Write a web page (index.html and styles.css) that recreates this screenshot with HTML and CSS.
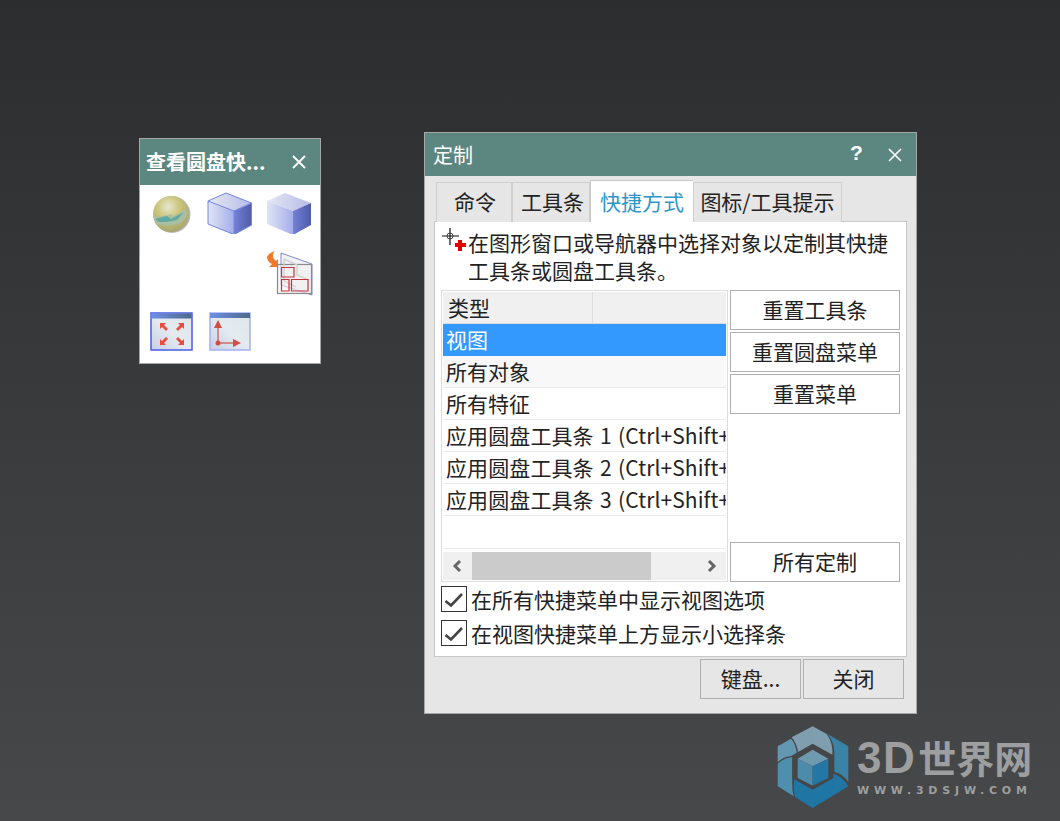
FILE: index.html
```html
<!DOCTYPE html>
<html lang="zh-CN">

<head>
  <meta charset="UTF-8">
  <title>定制</title>
  <link rel="stylesheet" href="styles.css">
</head>

<body>
  <!-- small radial toolbar window -->
  <div class="window pie-window">
    <div class="titlebar pie-title">
      <span class="pie-name">查看圆盘快...</span>
      <svg class="close" width="14" height="14" viewBox="0 0 14 14"><path d="M1 1 13 13M13 1 1 13" stroke="#fff" stroke-width="1.8" fill="none"/></svg>
    </div>
    <div class="pie-grid">
      <svg class="ball-icon" width="40" height="40" viewBox="0 0 40 40">
        <defs>
          <radialGradient id="ball" cx="0.42" cy="0.3" r="0.7"><stop offset="0" stop-color="#e8e6d0"/><stop offset="0.45" stop-color="#cbc67c"/><stop offset="1" stop-color="#a8a66e"/></radialGradient>
        </defs>
        <circle cx="20" cy="19.500" r="18.500" fill="#b8b8b8"/>
        <circle cx="19" cy="19" r="18" fill="url(#ball)"/>
        <path d="M1.500 22C8 20 14 22 18 19L22 21 33 15 36 17C35 23 31 27 26 29L14 31 5 29Z" fill="#a9bf9f"/>
        <path d="M3 24 15 21 19 24 32 17 25 25 15 27 7 27Z" fill="#5fa9a3"/>
      </svg>
      <svg width="46" height="44" viewBox="0 0 46 44">
        <defs>
          <linearGradient id="faceA" x1="0" x2="1" y1="0" y2="0"><stop offset="0" stop-color="#dfe5f5"/><stop offset="1" stop-color="#a4aeea"/></linearGradient>
          <linearGradient id="faceB" x1="0" x2="1" y1="0" y2="0"><stop offset="0" stop-color="#7481d6"/><stop offset="1" stop-color="#4e5ba8"/></linearGradient>
          <linearGradient id="faceT" x1="0" x2="1" y1="0" y2="0"><stop offset="0" stop-color="#e6e8f2"/><stop offset="1" stop-color="#b4bbe8"/></linearGradient>
        </defs>
        <path d="M2 11 20 3 46 13 28 21Z" fill="url(#faceT)"/>
        <path d="M2 11 28 21V45L2 34Z" fill="url(#faceA)"/>
        <path d="M28 21 46 13V35L28 45Z" fill="url(#faceB)"/>
        <path d="M2 11 20 3 45.500 13V35L28 44.500 2 34ZM2 11 28 21 45.500 13M28 21V44" fill="none" stroke="#7485de" stroke-width="1"/>
      </svg>
      <svg width="46" height="44" viewBox="0 0 46 44">
        <path d="M2 11 20 3 46 13 28 21Z" fill="url(#faceT)"/>
        <path d="M2 11 28 21V45L2 34Z" fill="url(#faceA)"/>
        <path d="M28 21 46 13V35L28 45Z" fill="url(#faceB)"/>
      </svg>
      <span></span>
      <span></span>
      <svg width="48" height="46" viewBox="0 0 48 46">
        <path d="M16 3 47 14V45L16 35Z" fill="#f2f2f6" stroke="#8088cc"/>
        <path d="M19 9 32 15V25L44 30M19 9V31L31 37" fill="none" stroke="#cfcfcf" stroke-width="1.500"/>
        <path d="M2 7C4 3 7 2 10 1 7 4 7 8 11 11L13 9V17H4L7 14C3 12 2 9 2 7Z" fill="#ee7a2e"/>
        <rect x="12.500" y="14.500" width="34" height="29" fill="#f0f0f0" fill-opacity="0.6" stroke="#8a8a8a" stroke-width="1.200"/>
        <path d="M19 9 32 15V25L44 30M19 14V31L31 37" fill="none" stroke="#d4d4d4" stroke-width="1.200"/>
        <path d="M16.500 17.500H29V27H16.500ZM16.500 29.500H24V41H16.500ZM26.500 29.500H43V41H26.500Z" fill="none" stroke="#c8323c" stroke-width="1.200"/>
      </svg>
      <svg width="44" height="40" viewBox="0 0 44 40">
        <defs>
          <linearGradient id="pane" x1="0" x2="1" y1="1" y2="0"><stop offset="0" stop-color="#c7cfe6"/><stop offset="0.5" stop-color="#e4ebf0"/><stop offset="1" stop-color="#dfe6ea"/></linearGradient>
          <linearGradient id="cap" x1="0" x2="1" y1="0" y2="0"><stop offset="0" stop-color="#6f8fe8"/><stop offset="1" stop-color="#4c6a88"/></linearGradient>
        </defs>
        <rect x="1" y="1" width="41" height="37" fill="url(#pane)" stroke="#4a5be8" stroke-width="1.500"/>
        <rect x="1.500" y="1.500" width="40" height="5" fill="url(#cap)"/>
        <path d="M10 11H16L14 13 18 17 16 19 12 15 10 17ZM34 11H28L30 13 26 17 28 19 32 15 34 17ZM10 33H16L14 31 18 27 16 25 12 29 10 27ZM34 33H28L30 31 26 27 28 25 32 29 34 27Z" fill="#ea4b3c"/>
      </svg>
      <svg class="axis-icon" width="42" height="40" viewBox="0 0 42 40">
        <rect x="1" y="1" width="40" height="37" fill="url(#pane)" stroke="#a4b0f0" stroke-width="1.500"/>
        <rect x="1" y="1" width="40" height="5" fill="url(#cap)"/>
        <path d="M9 31V15" stroke="#c8504a" stroke-width="1.200"/>
        <path d="M9 31H26" stroke="#c8504a" stroke-width="1.200"/>
        <path d="M9 8 13 16H5ZM32 31 24 27V35Z" fill="#cf4d42"/>
        <circle cx="9" cy="31" r="2.500" fill="#cf4d42"/>
      </svg>
    </div>
  </div>

  <!-- customize dialog -->
  <div class="window dialog">
    <div class="titlebar dlg-title">
      <span class="dlg-name">定制</span>
      <span class="help">?</span>
      <svg class="close" width="14" height="14" viewBox="0 0 14 14"><path d="M1 1 13 13M13 1 1 13" stroke="#fff" stroke-width="1.600" fill="none"/></svg>
    </div>
    <div class="dlg-body">
      <div class="tabs">
        <div class="tab tab-cmd">命令</div>
        <div class="tab tab-bar">工具条</div>
        <div class="tab active">快捷方式</div>
        <div class="tab tab-icon">图标/工具提示</div>
      </div>
      <div class="panel">
        <div class="hint">
          <svg class="pick" width="26" height="26" viewBox="0 0 26 26">
            <path d="M0 8H17M8 0V17" stroke="#111" stroke-width="1.200"/>
            <circle cx="8" cy="8" r="3" fill="none" stroke="#444"/>
            <path d="M16 12H20V15H24V19H20V23H16V19H13V15H16Z" fill="#e00000"/>
          </svg>
          <p>在图形窗口或导航器中选择对象以定制其快捷<br>工具条或圆盘工具条。</p>
        </div>
        <div class="middle">
          <div class="list">
            <div class="list-head"><span class="col-type">类型</span><span></span></div>
            <div class="row selected">视图</div>
            <div class="row alt">所有对象</div>
            <div class="row">所有特征</div>
            <div class="row row-key">应用圆盘工具条 1 (Ctrl+Shift+</div>
            <div class="row row-key">应用圆盘工具条 2 (Ctrl+Shift+</div>
            <div class="row row-key">应用圆盘工具条 3 (Ctrl+Shift+</div>
            <div class="list-empty"></div>
            <div class="scrollbar">
              <svg class="arrow" width="10" height="14" viewBox="0 0 10 14"><path d="M8 2 3 7 8 12" fill="none" stroke="#666" stroke-width="3"/></svg>
              <div class="track"><div class="thumb"></div></div>
              <svg class="arrow" width="10" height="14" viewBox="0 0 10 14"><path d="M2 2 7 7 2 12" fill="none" stroke="#666" stroke-width="3"/></svg>
            </div>
          </div>
          <div class="side">
            <button class="btn" type="button">重置工具条</button>
            <button class="btn" type="button">重置圆盘菜单</button>
            <button class="btn" type="button">重置菜单</button>
            <button class="btn btn-last" type="button">所有定制</button>
          </div>
        </div>
        <div class="check"><span class="box"><svg width="24" height="24" viewBox="0 0 24 24"><path d="M3.500 14 9 18.500 20 7" fill="none" stroke="#444" stroke-width="2.600"/></svg></span>在所有快捷菜单中显示视图选项</div>
        <div class="check"><span class="box"><svg width="24" height="24" viewBox="0 0 24 24"><path d="M3.500 14 9 18.500 20 7" fill="none" stroke="#444" stroke-width="2.600"/></svg></span>在视图快捷菜单上方显示小选择条</div>
      </div>
      <div class="footer">
        <button class="btn btn-foot" type="button">键盘...</button>
        <button class="btn btn-foot" type="button">关闭</button>
      </div>
    </div>
  </div>

  <!-- watermark -->
  <div class="mark">
    <svg width="76" height="88" viewBox="0 0 228 264">
      <path d="M50 43 113 10 155 33Q175 60 172 98L113 64 70 90Q65 60 50 43Z" fill="#7f9fb0"/>
      <path d="M158 33 220 70V178Q205 152 178 146V98Q180 60 158 33Z" fill="#3a82a6"/>
      <path d="M220 190 113 255 60 222Q54 190 58 167L113 198 175 152Q202 160 220 190Z" fill="#1f76a5"/>
      <path d="M8 122Q28 104 52 102V165Q50 195 56 220L8 190Z" fill="#4f8fae"/>
      <path d="M8 70 48 47Q62 62 66 92L52 98Q25 100 8 118Z" fill="#6498b2"/>
      <path d="M113 62 175 97V165L113 200 52 165V97Z" fill="#454648"/>
      <path d="M68 107 113 80 160 107 113 130Z" fill="#6f99ae"/>
      <path d="M68 107 113 130V188L68 165Z" fill="#4e8bab"/>
      <path d="M160 107V165L113 188V130Z" fill="#2477a5"/>
    </svg>
    <div class="mark-text">
      <div class="mark-name"><span class="mark-3d">3D</span>世界网</div>
      <div class="mark-url">WWW.3DSJW.COM</div>
    </div>
  </div>
</body>

</html>
```

FILE: styles.css
```css
*,
*:before,
*:after {
  box-sizing: border-box;
}

html,
body {
  height: 100%;
}

body {
  margin: 0;
  padding: 0;
  overflow: hidden;
  position: relative;
  background: linear-gradient(#2c2d2f, #47484a);
  font-family: "Noto Sans CJK SC", "Noto Sans", sans-serif;
  font-size: 21px;
  color: #222;
}

svg {
  display: block;
}

.window {
  position: absolute;
  border: 1px solid #a6a6a6;
}

.titlebar {
  display: flex;
  align-items: center;
  background: #5c8780;
  color: #fff;
}

/* pie window */
.pie-window {
  left: 139px;
  top: 138px;
  width: 182px;
  height: 226px;
  background: #fff;
}

.pie-title {
  height: 46px;
  padding: 0 14px 0 6px;
  justify-content: space-between;
}

.pie-name {
  font-size: 20px;
  font-weight: 700;
  position: relative;
  top: -1px;
}

.pie-grid {
  display: grid;
  grid-template-columns: 56px 59px 48px;
  grid-template-rows: 60px 62px 40px;
  justify-items: start;
  padding: 5px 0 0 10px;
}

.ball-icon {
  margin: 5px 0 0 2px;
}

.axis-icon {
  margin-left: 3px;
}

/* dialog */
.dialog {
  left: 424px;
  top: 132px;
  width: 493px;
  height: 582px;
  background: #e6e6e6;
}

.dlg-title {
  height: 43px;
  padding: 0 14px 0 8px;
}

.dlg-name {
  flex: 1;
  font-size: 20px;
}

.help {
  width: 38px;
  font-family: "Liberation Sans", sans-serif;
  font-weight: 700;
  font-size: 21px;
  margin-top: -3px;
}

.dlg-body {
  padding: 4px 9px 0 9px;
}

.tabs {
  display: flex;
  align-items: flex-end;
  height: 42px;
  padding-left: 2px;
  position: relative;
  z-index: 1;
  margin-bottom: -1px;
}

.tab {
  height: 40px;
  line-height: 36px;
  text-align: center;
  background: #e6e6e6;
  border: 1px solid #cfcfcf;
  border-bottom: none;
  white-space: nowrap;
}

.tab-cmd {
  width: 76px;
  padding-left: 2px;
}

.tab-bar {
  width: 78px;
  padding-left: 3px;
}

.tab-icon {
  width: 149px;
}

.tab.active {
  width: 103px;
  height: 42px;
  line-height: 40px;
  background: #fff;
  color: #2f97c8;
  border-color: #c8c8c8;
  border-right: none;
}

.panel {
  height: 436px;
  background: #fff;
  border: 1px solid #c8c8c8;
  padding: 6px 6px 0 6px;
}

.hint {
  display: flex;
  height: 62px;
}

.pick {
  flex: none;
  margin: 0 0 0 1px;
}

.hint p {
  margin: 0;
  line-height: 28px;
  white-space: nowrap;
}

.middle {
  display: flex;
  gap: 2px;
}

.list {
  width: 287px;
  height: 292px;
  border: 1px solid #dcdcdc;
  padding: 1px;
  display: flex;
  flex-direction: column;
  overflow: hidden;
}

.list-head {
  display: flex;
  flex: none;
  height: 32px;
  line-height: 30px;
  background: #f0f0f0;
  border-bottom: 1px solid #dcdcdc;
}

.col-type {
  width: 150px;
  padding-left: 5px;
  border-right: 1px solid #dcdcdc;
}

.row {
  flex: none;
  height: 32px;
  line-height: 31px;
  padding-left: 3px;
  border-bottom: 1px solid #ececec;
  white-space: nowrap;
  overflow: hidden;
}

.row-key {
  word-spacing: 1.5px;
  letter-spacing: 0.1px;
}

.row.selected {
  background: #3399ff;
  color: #fff;
  border-bottom: none;
}

.row.alt {
  background: #f8f8f8;
}

.list-empty {
  flex: 1;
  border-bottom: 1px solid #ececec;
}

.scrollbar {
  display: flex;
  align-items: center;
  flex: none;
  height: 28px;
  margin-top: 3px;
  background: #f0f0f0;
}

.arrow {
  flex: none;
  margin: 0 9px 0 9px;
}

.track {
  flex: 1;
  height: 100%;
}

.thumb {
  width: 179px;
  height: 100%;
  margin-left: 1px;
  background: #cbcbcb;
}

.side {
  display: flex;
  flex-direction: column;
  gap: 2px;
  width: 170px;
}

.btn {
  height: 40px;
  padding: 0 0 3px;
  background: #fff;
  border: 1px solid #b0b0b0;
  font: inherit;
  color: #222;
}

.btn-last {
  margin-top: auto;
}

.check {
  display: flex;
  align-items: center;
  gap: 4px;
  height: 34px;
  white-space: nowrap;
}

.check:first-of-type {
  margin-top: 2px;
}

.box {
  display: block;
  width: 26px;
  height: 26px;
  flex: none;
  background: #fff;
  border: 1px solid #333;
}

.footer {
  display: flex;
  justify-content: flex-end;
  gap: 2px;
  padding: 2px 3px 0 0;
}

.btn-foot {
  width: 101px;
  background: #e6e6e6;
}

/* watermark */
.mark {
  position: absolute;
  left: 775px;
  top: 723px;
  display: flex;
  gap: 6px;
  color: #9d9e9f;
}

.mark-text {
  padding-top: 10px;
}

.mark-name {
  font-family: "Noto Sans CJK SC", sans-serif;
  font-size: 38px;
  font-weight: 700;
  line-height: 48px;
  white-space: nowrap;
}

.mark-3d {
  font-family: "Liberation Sans", sans-serif;
  font-size: 44px;
  letter-spacing: 1.5px;
  margin-right: 2px;
}

.mark-url {
  font-family: "DejaVu Sans", sans-serif;
  font-size: 11px;
  font-weight: 700;
  line-height: 12px;
  letter-spacing: 4.8px;
  white-space: nowrap;
  margin-top: 3px;
}
```
